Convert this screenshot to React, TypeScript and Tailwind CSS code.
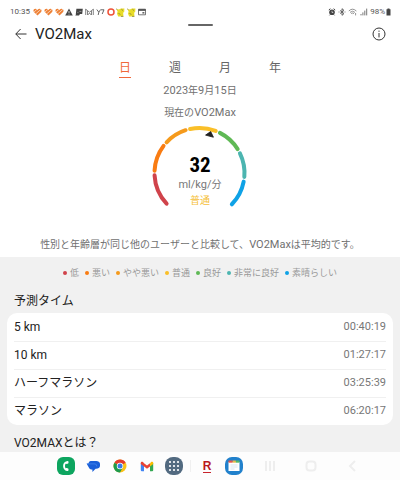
import { useState } from 'react';
import type { ReactNode } from 'react';

const periods = ['日', '週', '月', '年'];

const levels = [
  { label: '低', color: '#d0434b', start: 137, end: 177 },
  { label: '悪い', color: '#f97c12', start: 183, end: 217 },
  { label: 'やや悪い', color: '#f59a1c', start: 223, end: 252 },
  { label: '普通', color: '#fabf28', start: 258, end: 291 },
  { label: '良好', color: '#5fb955', start: 297, end: 328 },
  { label: '非常に良好', color: '#4cb5b0', start: 334, end: 365 },
  { label: '素晴らしい', color: '#0fa2e6', start: 371, end: 404 },
];

const predictions = [
  { distance: '5 km', time: '00:40:19' },
  { distance: '10 km', time: '01:27:17' },
  { distance: 'ハーフマラソン', time: '03:25:39' },
  { distance: 'マラソン', time: '06:20:17' },
];

function arcPath(start: number, end: number) {
  const point = (deg: number) => {
    const rad = (deg * Math.PI) / 180;
    return `${(47.5 + 45 * Math.cos(rad)).toFixed(2)} ${(48 + 45 * Math.sin(rad)).toFixed(2)}`;
  };
  return `M${point(start)}A45 45 0 0 1 ${point(end)}`;
}

function HeartIcon() {
  return (
    <svg viewBox="0 0 9 8" className="h-2 w-[9px]" aria-hidden="true">
      <path d="M4.5 7.4.9 3.9C-.2 2.6.8.8 2.4.8q1.3 0 2.1 1.2Q5.3.8 6.6.8c1.6 0 2.6 1.8 1.5 3.1z" fill="#ee8136" />
      <path d="M.6 4.4 5 .4M2.4 6.2 8.2 1.1" stroke="#fff" strokeWidth=".6" />
    </svg>
  );
}

function CharacterIcon() {
  return (
    <svg viewBox="0 0 9 9" className="h-[9px] w-[9px]" aria-hidden="true">
      <path d="M.3 1 2 1.6 3.5 1.2 5 .6 8.4.4 8.2 4 7.2 4.6 7.4 8.4H2.2L1 5.8 1.6 3.6z" fill="#e8dc28" />
      <path d="m.2.8 1.2.8M5.4 1.2 7 2.6M2.4 5.4l2 1M5 8.4h2.4" stroke="#77713a" strokeWidth=".7" />
    </svg>
  );
}

function StatusBar() {
  return (
    <div className="flex h-6 items-center justify-between pl-[10px] pr-[9px] text-[8px] text-[#555]">
      <div className="flex items-center gap-[3px]">
        <span>10:35</span>
        <div className="flex w-[113px] items-center justify-between">
          <HeartIcon />
          <HeartIcon />
          <HeartIcon />
          <svg viewBox="0 0 8 8" className="h-2 w-2" aria-hidden="true">
            <path d="M4 .5 7.8 7.4H.2z" fill="#444" />
            <path d="M4 3v2.2M4 5.8v.8" stroke="#fff" strokeWidth=".7" />
          </svg>
          <svg viewBox="0 0 8 8" className="h-2 w-2" aria-hidden="true">
            <path d="M1.4.7h6.4L7.2 6H5L4 7.5H.3L1 6.3H.8z" fill="#444" />
            <path d="M2.4 4.4h1m1-1h2" stroke="#bbb" strokeWidth=".7" />
          </svg>
          <svg viewBox="0 0 9 8" className="h-2 w-[9px]" fill="none" stroke="#666" strokeWidth=".8" aria-hidden="true">
            <path d="M.7 1v6M8.3 1v6M.7 1.2l3.8 3 3.8-3M2.5 7V3M6.5 7V3M2.8 7l1.7-2 1.7 2" />
          </svg>
          <svg viewBox="0 0 9 8" className="h-2 w-[9px]" fill="none" stroke="#555" strokeWidth=".9" aria-hidden="true">
            <path d="m.8 1.5 2 2.7 1.8-2.7M2.8 4.2 2.2 7M5 1.8h3L6.2 6" />
          </svg>
          <svg viewBox="0 0 8 8" className="h-2 w-2" aria-hidden="true">
            <circle cx="4" cy="4" r="3" fill="none" stroke="#ef5238" strokeWidth="1.5" />
          </svg>
          <CharacterIcon />
          <CharacterIcon />
          <svg viewBox="0 0 8 8" className="h-2 w-2" aria-hidden="true">
            <path d="M.5 1.2h7v5.6h-7z" fill="none" stroke="#555" strokeWidth=".8" />
            <path d="M.5 2h7" stroke="#444" strokeWidth="1.6" />
            <path d="M4.4 4h2v1.6h-2z" fill="#666" />
          </svg>
        </div>
      </div>
      <div className="flex items-center gap-[2px]">
        <svg viewBox="0 0 8 8" className="h-2 w-2" aria-hidden="true">
          <circle cx="4" cy="4.3" r="2.8" fill="#444" />
          <path d="M.8 2 2.4.7M7.2 2 5.6.7M1.5 7.3l.7-.8M6.5 7.3l-.7-.8" stroke="#444" />
          <path d="M4 2.8v1.7h1.3" fill="none" stroke="#fff" strokeWidth=".6" />
        </svg>
        <svg viewBox="0 0 8 8" className="h-2 w-2" fill="none" stroke="#555" strokeWidth=".9" aria-hidden="true">
          <path d="m2 2.4 4 3.2L4 7.3V.7l2 1.7-4 3.2M.6 4h.8M6.6 4h.8" />
        </svg>
        <svg viewBox="0 0 10 8" className="h-2 w-[10px]" fill="none" stroke="#777" strokeWidth=".8" aria-hidden="true">
          <path d="M.8 3Q4.5-.6 8.4 3M2 4.4q2.6-2.4 5 0M3.2 5.6q1.4-1.2 2.8 0M4.6 6.8h.1M7.6 5v2.4" />
        </svg>
        <svg viewBox="0 0 8 8" className="h-2 w-2" stroke="#777" strokeWidth="1" aria-hidden="true">
          <path d="M1 7.4V6M2.9 7.4V4.4M4.8 7.4V2.6M6.7 7.4V.6" />
        </svg>
        <div className="flex items-center gap-px">
          <span>98%</span>
          <svg viewBox="0 0 5 8" className="h-2 w-[5px]" aria-hidden="true">
            <path d="M1.5.4h2v.8h1v6.4h-4V1.2h1z" fill="#444" />
          </svg>
        </div>
      </div>
    </div>
  );
}

function Gauge() {
  return (
    <div className="relative mx-auto mt-1 w-24">
      <svg viewBox="0 0 96 86" className="block w-full" aria-hidden="true">
        {levels.map((level) => (
          <path
            key={level.label}
            d={arcPath(level.start, level.end)}
            fill="none"
            stroke={level.color}
            strokeWidth="4"
            strokeLinecap="round"
          />
        ))}
        <path d="m58.7 6.6 2.7 5.6-7.8-2.1z" fill="#222" stroke="#222" strokeWidth=".9" strokeLinejoin="round" />
      </svg>
      <div className="absolute inset-x-0 top-7 flex flex-col items-center">
        <span className="font-['Roboto_Condensed',Roboto,sans-serif] text-[21px] leading-6 font-bold text-black">
          32
        </span>
        <span className="text-[11px] leading-4 text-[#777]">
          ml/kg/<span className="text-[10px]">分</span>
        </span>
        <span className="text-[10px] leading-4 text-[#f5bf3c]">普通</span>
      </div>
    </div>
  );
}

function DockButton({ label, children }: { label: string; children: ReactNode }) {
  return (
    <button type="button" aria-label={label} className="flex size-5 items-center justify-center">
      {children}
    </button>
  );
}

function Dock() {
  return (
    <nav className="flex h-7 items-center bg-[#fdfdfd] pl-14">
      <div className="flex gap-[7px]">
        <DockButton label="Phone">
          <svg viewBox="0 0 18 18" className="size-[18px]">
            <rect width="18" height="18" rx="6" fill="#0da55f" />
            <path d="M10.8 3.9C7.9 4.2 6.1 6 6.1 9s1.8 4.9 4.7 5.1c.8 0 1-1.9.4-2.5l-1.5-.5c-.5 0-.7.4-1.1.1-.8-.8-.8-3.6 0-4.4.4-.3.6.1 1.1.1l1.5-.5c.6-.6.4-2.5-.4-2.5z" fill="#fff" />
          </svg>
        </DockButton>
        <DockButton label="Messages">
          <svg viewBox="0 0 14 13" className="h-[13px] w-[14px]">
            <path d="M4.5 1h5.7a3.7 3.7 0 0 1 0 7.8H9.6L6.4 12V9.4H5.2C3 9.2 2.8 7 1.4 5L.6 3.6h1.8Q2.8 1.2 4.5 1z" fill="#1a5fd8" />
            <path d="M1.4 3.9H9q1.8.2 1.8 2.4" fill="none" stroke="#4385ef" strokeWidth=".8" />
          </svg>
        </DockButton>
        <DockButton label="Chrome">
          <svg viewBox="0 0 14 14" className="size-[14px]">
            <circle cx="7" cy="7" r="6.5" fill="#fbc116" />
            <path d="M7 7 1.4 3.7a6.5 6.5 0 0 1 11.3 0z" fill="#e33b2e" />
            <path d="M7 7 1.4 3.7A6.5 6.5 0 0 0 7 13.5L9.8 8.6z" fill="#1e9a4c" />
            <circle cx="7" cy="7" r="3.2" fill="#fff" />
            <circle cx="7" cy="7" r="2.5" fill="#3c7be6" />
          </svg>
        </DockButton>
        <DockButton label="Gmail">
          <svg viewBox="0 0 14 11" className="h-[11px] w-[14px]">
            <path d="M.8 2v7.2q0 1 1 1H4V4.8z" fill="#4285f4" />
            <path d="M13.2 2v7.2q0 1-1 1H10V4.8z" fill="#34a853" />
            <path d="M10 2.5v3l3.2-2.4V2c0-1.3-1.3-1.6-2.2-.9z" fill="#fbbc04" />
            <path d="M4 2.2 7 4.5l3-2.3v3.3L7 7.8.8 3.1V2C.8.7 2.1.4 3 1.1z" fill="#ea4335" />
          </svg>
        </DockButton>
        <DockButton label="Apps">
          <svg viewBox="0 0 18 18" className="size-[18px]">
            <rect width="18" height="18" rx="8" fill="#526a80" />
            <g fill="#fff">
              {[5, 9, 13].map((y) => [5, 9, 13].map((x) => <circle key={`${x}-${y}`} cx={x} cy={y} r="1.1" />))}
            </g>
          </svg>
        </DockButton>
      </div>
      <span className="mx-[6px] h-3 w-px bg-[#f0f0f0]" />
      <div className="flex gap-[7px]">
        <DockButton label="Rakuten">
          <span className="border-b border-[#c8242c] font-['Liberation_Sans',sans-serif] text-[12px] leading-3 font-bold text-[#b91820]">
            R
          </span>
        </DockButton>
        <DockButton label="Calendar">
          <svg viewBox="0 0 18 18" className="size-[18px]">
            <rect width="18" height="18" rx="7" fill="#2181cc" />
            <path d="M3.5 5h11v9h-11z" fill="#fff" />
            <path d="M3.5 3.5h4.2v2.2H3.5z" fill="#e7574c" />
            <path d="M7.7 3.5h3.2v2.2H7.7z" fill="#e8bd4a" />
            <path d="M10.9 3.5h3.6v2.2h-3.6z" fill="#53b86b" />
            <path d="M5.5 8h7M5.5 10h7M5.5 12h4" stroke="#c7dcec" strokeWidth=".7" />
          </svg>
        </DockButton>
      </div>
      <div className="ml-4 flex gap-[21px] text-[#eee]">
        <DockButton label="Recents">
          <svg viewBox="0 0 12 12" className="size-3" stroke="currentColor" strokeWidth="2">
            <path d="M2 1v10M6 1v10M10 1v10" />
          </svg>
        </DockButton>
        <DockButton label="Home">
          <svg viewBox="0 0 12 12" className="size-3" fill="none" stroke="currentColor" strokeWidth="2">
            <rect x="1.5" y="1.5" width="9" height="9" rx="3" />
          </svg>
        </DockButton>
        <DockButton label="Back">
          <svg viewBox="0 0 12 12" className="size-3" fill="none" stroke="currentColor" strokeWidth="2">
            <path d="M9 1 4 6l5 5" />
          </svg>
        </DockButton>
      </div>
    </nav>
  );
}

function App() {
  const [period, setPeriod] = useState('日');

  return (
    <div className="flex min-h-screen flex-col bg-white font-[Roboto,'Noto_Sans_CJK_JP',sans-serif] text-[#222]">
      <StatusBar />
      <div className="mx-auto h-[2px] w-[25px] rounded-full bg-[#666]" />

      <header className="flex h-4 items-center gap-2 pr-[14px] pl-[15px]">
        <button type="button" aria-label="戻る">
          <svg viewBox="0 0 12 12" className="size-3" fill="none" stroke="#333" strokeWidth="1">
            <path d="M11.5 6H.8M5.6 1 .8 6l4.8 5" />
          </svg>
        </button>
        <h1 className="flex-1 text-[15px] leading-4">VO2Max</h1>
        <button type="button" aria-label="情報">
          <svg viewBox="0 0 14 14" className="size-[14px]" fill="none" stroke="#333" strokeWidth="1">
            <circle cx="7" cy="7" r="6" />
            <path d="M7 6v4.4M7 3.6v1.2" />
          </svg>
        </button>
      </header>

      <div className="mt-[17px] flex justify-center" role="tablist">
        {periods.map((item) => (
          <button
            key={item}
            type="button"
            role="tab"
            aria-selected={item === period}
            onClick={() => setPeriod(item)}
            className="flex w-[50px] justify-center"
          >
            <span
              className={`border-b text-[12px] leading-[18px] ${
                item === period ? 'border-[#f0683a] text-[#f0683a]' : 'border-transparent text-[#666]'
              }`}
            >
              {item}
            </span>
          </button>
        ))}
      </div>

      <section className="pb-1 text-center text-[10px] text-[#707070]">
        <p className="mt-[5px] leading-4">
          <span className="text-[11px]">2023</span>年<span className="text-[11px]">9</span>月
          <span className="text-[11px]">15</span>日
        </p>
        <p className="mt-[6px] leading-4">
          現在の<span className="text-[11px]">VO2Max</span>
        </p>
        <Gauge />
        <p className="mt-[26px] leading-4">
          性別と年齢層が同じ他のユーザーと比較して、<span className="text-[11px]">VO2Max</span>は平均的です。
        </p>
      </section>

      <main className="flex-1 bg-[#f1f1f1] px-[7px]">
        <ul className="flex flex-wrap justify-center gap-x-[6px] pt-2 text-[9px] leading-4 text-[#999]">
          {levels.map((level) => (
            <li key={level.label} className="flex items-center gap-[3px]">
              <span className="size-1 rounded-full" style={{ backgroundColor: level.color }} />
              {level.label}
            </li>
          ))}
        </ul>

        <h2 className="mt-3 px-[7px] text-[12px] leading-4">予測タイム</h2>
        <div className="mt-1 rounded-[10px] bg-white px-[7px]">
          <table className="w-full text-left">
            <tbody className="divide-y divide-[#f0f0f0]">
              {predictions.map((row) => (
                <tr key={row.distance} className="h-7">
                  <th scope="row" className="p-0 text-[12px] leading-4 font-normal">
                    {row.distance}
                  </th>
                  <td className="p-0 text-right text-[11px] leading-4 text-[#777]">{row.time}</td>
                </tr>
              ))}
            </tbody>
          </table>
        </div>
        <h2 className="mt-[10px] px-[7px] text-[12px] leading-4">VO2MAXとは？</h2>
      </main>

      <Dock />
    </div>
  );
}

export default App;
